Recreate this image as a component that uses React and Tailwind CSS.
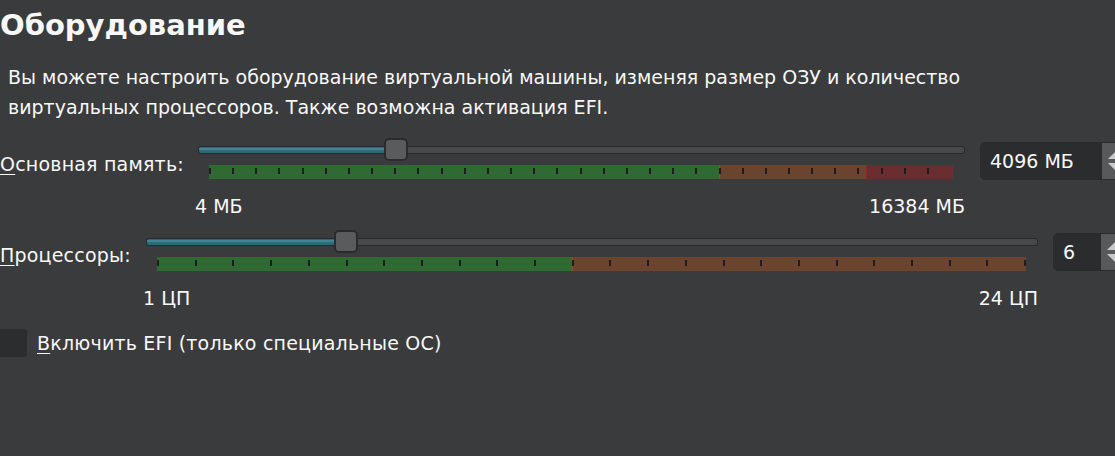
import React from "react";

const memTicks = Array.from({ length: 32 }, (_, i) => i * 23.16);
const cpuTicks = Array.from({ length: 24 }, (_, i) => i * 37.7);

// полоса с делениями под ползунком
const TickBar = ({ width, segments, ticks }) => (
  <div className="relative flex h-[14px]" style={{ width }}>
    {segments.map((s, i) => (
      <div key={i} className={s.className} style={{ width: s.width }} />
    ))}
    {ticks.map((t, i) => (
      <div
        key={i}
        className="absolute top-[3px] h-[6px] w-[2px] bg-[#1c1d1e]"
        style={{ left: t }}
      />
    ))}
  </div>
);

const Slider = ({ width, fill, barWidth, segments, ticks, minLabel, maxLabel }) => (
  <div className="flex flex-col" style={{ width }}>
    <div className="relative h-[24px]">
      <div className="absolute left-0 right-0 top-[8px] h-[8px] rounded-[3px] border border-[#28292b] bg-[#48494b]" />
      <div
        className="absolute left-0 top-[8px] h-[8px] rounded-l-[3px] border border-[#28292b] bg-[#2d6b76]"
        style={{ width: fill + 4 }}
      >
        <div className="mt-[1px] h-[2px] bg-[#3f8593]" />
      </div>
      <div
        className="absolute top-0 h-[23px] w-[24px] rounded-[5px] border-2 border-[#2a2b2d] bg-[#5a5b5d]"
        style={{ left: fill }}
      />
    </div>
    <div className="mt-[3px] pl-[11px]">
      <TickBar width={barWidth} segments={segments} ticks={ticks} />
    </div>
    <div className="mt-[15px] flex justify-between text-[19px] leading-[24px]">
      <span className="-ml-[3px]">{minLabel}</span>
      <span>{maxLabel}</span>
    </div>
  </div>
);

const SpinBox = ({ value, width, textWidth }) => (
  <div
    className="flex h-[38px] shrink-0 items-stretch overflow-hidden rounded-[5px] border border-[#2a2b2d] bg-[#2b2c2e]"
    style={{ width }}
  >
    <div className="flex items-center pl-[9px] text-[19px]" style={{ width: textWidth }}>
      {value}
    </div>
    <div className="flex w-[28px] flex-col items-start justify-center gap-[4px] bg-[#58595b] pl-[6px]">
      <div className="h-0 w-0 border-x-[8px] border-b-[8px] border-x-transparent border-b-[#c9c9c9]" />
      <div className="h-0 w-0 border-x-[8px] border-t-[8px] border-x-transparent border-t-[#c9c9c9]" />
    </div>
  </div>
);

export default function App() {
  return (
    <div className="h-[456px] w-[1115px] overflow-hidden bg-[#3a3b3d] font-['DejaVu_Sans',sans-serif] text-[#f8f8f8]">
      <div className="w-[1160px]">
        <h1 className="pt-[8px] text-[29px] font-bold leading-[34px]">Оборудование</h1>

        <p className="ml-[8px] mt-[20px] text-[19px] leading-[30px]">
          Вы можете настроить оборудование виртуальной машины, изменяя размер ОЗУ и количество
          <br />
          виртуальных процессоров. Также возможна активация EFI.
        </p>

        {/* основная память */}
        <div className="mt-[16px] flex items-start">
          <div className="mt-[14px] w-[198px] text-[19px] leading-[24px] tracking-[0.2px]">
            <span className="underline underline-offset-[3px]">О</span>сновная память:
          </div>
          <Slider
            width={767}
            fill={186}
            barWidth={744}
            ticks={memTicks}
            segments={[
              { width: 511, className: "bg-[#2f6a32] border-r border-[#7a5a20]" },
              { width: 147, className: "bg-[#6b4430] border-r border-[#8a2a25]" },
              { width: 86, className: "bg-[#6a2e30]" },
            ]}
            minLabel="4 МБ"
            maxLabel="16384 МБ"
          />
          <div className="ml-[15px] mt-[4px]">
            <SpinBox value="4096 МБ" width={152} textWidth={121} />
          </div>
        </div>

        {/* процессоры */}
        <div className="mt-[12px] flex items-start">
          <div className="mt-[13px] w-[146px] text-[19px] leading-[24px] tracking-[0.2px]">
            <span className="underline underline-offset-[3px]">П</span>роцессоры:
          </div>
          <Slider
            width={892}
            fill={188}
            barWidth={869}
            ticks={cpuTicks}
            segments={[
              { width: 416, className: "bg-[#2f6a32] border-r border-[#7a5a20]" },
              { width: 453, className: "bg-[#6b4430]" },
            ]}
            minLabel="1 ЦП"
            maxLabel="24 ЦП"
          />
          <div className="ml-[15px] mt-[3px]">
            <SpinBox value="6" width={76} textWidth={48} />
          </div>
        </div>

        {/* EFI */}
        <div className="mt-[19px] flex items-center gap-[10px]">
          <div className="h-[28px] w-[27px] rounded-r-[3px] bg-[#2c2d2f]" />
          <span className="text-[19px] leading-[24px] tracking-[0.2px]">
            <span className="underline underline-offset-[3px]">В</span>ключить EFI (только специальные ОС)
          </span>
        </div>
      </div>
    </div>
  );
}
